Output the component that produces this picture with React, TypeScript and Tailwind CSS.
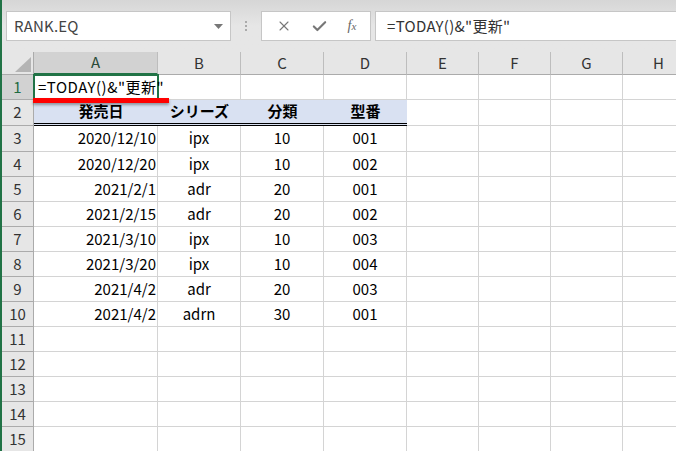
import React from 'react';
import { X, Check } from 'lucide-react';

const FONT = "font-['Noto_Sans_CJK_JP','Noto_Sans',sans-serif]";

const COLS = [
  { key: 'A', w: 'w-[124px]' },
  { key: 'B', w: 'w-[83px]' },
  { key: 'C', w: 'w-[83px]' },
  { key: 'D', w: 'w-[83px]' },
  { key: 'E', w: 'w-[72px]' },
  { key: 'F', w: 'w-[72px]' },
  { key: 'G', w: 'w-[72px]' },
  { key: 'H', w: 'w-[72px]' },
];

const DATA = [
  ['2020/12/10', 'ipx', '10', '001'],
  ['2020/12/20', 'ipx', '10', '002'],
  ['2021/2/1', 'adr', '20', '001'],
  ['2021/2/15', 'adr', '20', '002'],
  ['2021/3/10', 'ipx', '10', '003'],
  ['2021/3/20', 'ipx', '10', '004'],
  ['2021/4/2', 'adr', '20', '003'],
  ['2021/4/2', 'adrn', '30', '001'],
];

const RowHeader: React.FC<{ n: number; active?: boolean; h: string }> = ({ n, active, h }) => (
  <div
    className={`w-[32px] shrink-0 ${h} flex items-center justify-center border-r border-b border-[#ababab] text-[15px] ${
      active ? 'bg-[#d2d2d2] text-[#1e6b40]' : 'bg-[#e6e6e6] text-[#333]'
    }`}
  >
    {n}
  </div>
);

const TopBar = () => (
  <div className="h-[52px] bg-gradient-to-b from-[#d6d6d6] via-[#e6e6e6] to-[#e6e6e6] flex items-start pt-[11px] pl-[4px] gap-[4px]">
    {/* Name box */}
    <div className="w-[225px] h-[30px] bg-white border border-[#c6c6c6] flex items-center pl-[7px] pr-[6px] text-[15px] text-[#444] tracking-[0.2px]">
      <span className="flex-1">RANK.EQ</span>
      <svg width="9" height="5" viewBox="0 0 9 5" className="mr-[1px]">
        <path d="M0 0h9L4.5 5z" fill="#777" />
      </svg>
    </div>
    {/* separator dots */}
    <div className="w-[22px] h-[30px] flex flex-col items-center justify-center gap-[2px]">
      <div className="w-[2px] h-[2px] bg-[#aaa]" />
      <div className="w-[2px] h-[2px] bg-[#aaa]" />
      <div className="w-[2px] h-[2px] bg-[#aaa]" />
    </div>
    {/* buttons */}
    <div className="w-[110px] h-[30px] bg-white border border-[#c6c6c6] flex items-center justify-around px-[4px]">
      <X size={16} strokeWidth={1.6} className="text-[#777]" />
      <Check size={17} strokeWidth={3} className="text-[#777]" />
      <span className="font-['Liberation_Serif',serif] italic text-[14px] text-[#666] leading-none">
        f<span className="text-[11px]">x</span>
      </span>
    </div>
    {/* formula */}
    <div className="flex-1 h-[30px] bg-white border border-[#c6c6c6] border-r-0 flex items-center pl-[11px] text-[15px] text-[#333] tracking-[0.3px]">
      =TODAY()&amp;"更新"
    </div>
  </div>
);

const ColumnHeader = () => (
  <div className="flex h-[23px] bg-[#e6e6e6]">
    <div className="w-[32px] shrink-0 border-r border-b border-[#ababab] relative">
      <svg width="16" height="15" viewBox="0 0 16 15" className="absolute right-[2px] bottom-[2px]">
        <path d="M16 0V15H0z" fill="#b4b4b4" />
      </svg>
    </div>
    {COLS.map((c) => (
      <div
        key={c.key}
        className={`${c.w} shrink-0 flex items-center justify-center text-[15px] border-r border-[#bdbdbd] ${
          c.key === 'A'
            ? 'bg-[#d2d2d2] text-[#2a4a38] border-b-2 border-b-[#217346]'
            : 'text-[#333] border-b border-b-[#ababab]'
        }`}
      >
        {c.key}
      </div>
    ))}
  </div>
);

export default function App() {
  return (
    <div className={`w-[676px] h-[451px] overflow-hidden bg-white border-l-2 border-[#217346] ${FONT} relative`}>
      <TopBar />
      <ColumnHeader />

      {/* Row 1 */}
      <div className="flex h-[25px]">
        <RowHeader n={1} active h="h-[25px]" />
        {COLS.map((c, i) => (
          <div
            key={c.key}
            className={`${c.w} shrink-0 border-b border-[#d4d4d4] ${i === 0 ? '' : 'border-r'} relative`}
          >
            {i === 0 && (
              <>
                <div className="absolute -left-px -top-px w-[126px] h-[27px] border-2 border-[#217346] z-10 pointer-events-none" />
                <span className="absolute left-[4px] top-0 h-[25px] flex items-center whitespace-nowrap text-[15px] text-black tracking-[0.5px] z-20">
                  =TODAY()&amp;"更新"
                </span>
              </>
            )}
          </div>
        ))}
      </div>

      {/* Row 2: table header */}
      <div className="flex h-[26px]">
        <RowHeader n={2} h="h-[26px]" />
        {COLS.map((c, i) => {
          const labels = ['発売日', 'シリーズ', '分類', '型番'];
          if (i < 4) {
            return (
              <div
                key={c.key}
                className={`${c.w} shrink-0 bg-[#d9e1f2] border-b-[3px] border-double border-b-black flex items-center justify-center text-[15px] font-bold text-black ${
                  i === 0 ? 'pl-[10px]' : ''
                }`}
              >
                {labels[i]}
              </div>
            );
          }
          return <div key={c.key} className={`${c.w} shrink-0 border-r border-b border-[#d4d4d4]`} />;
        })}
      </div>

      {/* Data rows */}
      {DATA.map((r, ri) => {
        const h = ri === 0 ? 'h-[26px]' : 'h-[25px]';
        return (
          <div key={ri} className={`flex ${h}`}>
            <RowHeader n={ri + 3} h={h} />
            {COLS.map((c, i) => (
              <div
                key={c.key}
                className={`${c.w} shrink-0 border-r border-b border-[#d4d4d4] flex items-center text-[15px] text-black ${
                  i === 0 ? 'justify-end pr-[1px]' : 'justify-center'
                }`}
              >
                {r[i] ?? ''}
              </div>
            ))}
          </div>
        );
      })}

      {/* Empty rows */}
      {[11, 12, 13, 14, 15].map((n) => (
        <div key={n} className="flex h-[25px]">
          <RowHeader n={n} h="h-[25px]" />
          {COLS.map((c) => (
            <div key={c.key} className={`${c.w} shrink-0 border-r border-b border-[#d4d4d4]`} />
          ))}
        </div>
      ))}

      {/* red annotation underline */}
      <div className="absolute left-[31px] top-[98px] w-[136px] h-[5px] bg-[#ff0000] shadow-[0_2px_3px_rgba(0,0,0,0.35)] z-30" />
    </div>
  );
}
